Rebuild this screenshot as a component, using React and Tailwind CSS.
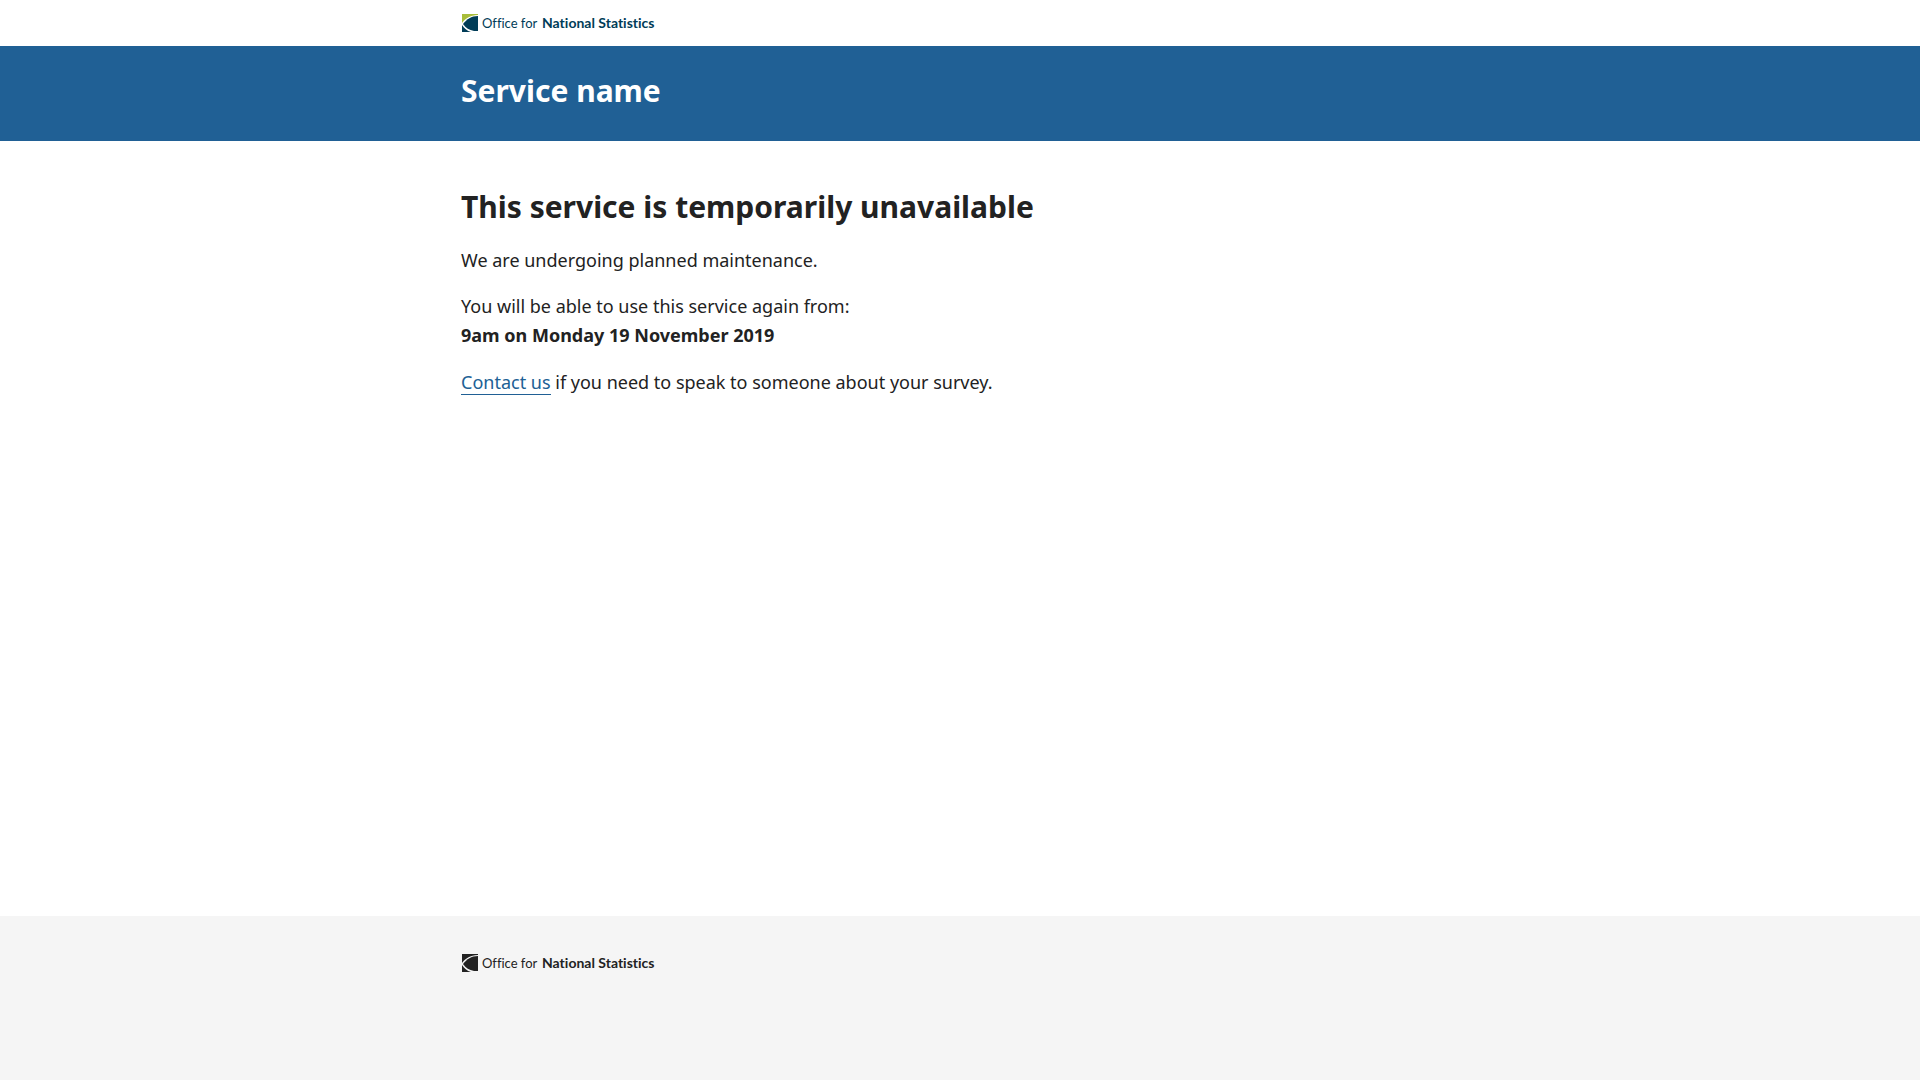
function Logo({ mono }) {
  const dark = mono ? '#222222' : '#003c57';
  const green = mono ? '#222222' : '#a8bd3a';
  return (
    <svg viewBox="0 0 197 19" className="block h-[19px] w-[197px]" role="img" aria-label="Office for National Statistics">
      <path d="M1 0H17V1C9 1 4 5 1 9Z" fill={green} />
      <path d="M17 2V17H13C8 16 5 14 2 10C6 5 10 2 17 2Z" fill={dark} />
      <path d="M1 11C3 14 6 17 10 18H1Z" fill={dark} />
      <g fill={dark} fontFamily="Lato, sans-serif" className="[font-variant-ligatures:none]">
        <text x="21" y="14" fontSize="13">Office for</text>
        <text x="81" y="14" fontSize="14" fontWeight="700">National Statistics</text>
      </g>
    </svg>
  );
}

function Container({ children }) {
  return <div className="mx-auto w-full max-w-[1030px] px-4 box-border">{children}</div>;
}

export default function App() {
  return (
    <div className="flex min-h-screen flex-col bg-white font-['Noto_Sans',sans-serif] text-lg text-[#222222]">
      <header>
        <Container>
          <div className="flex h-[46px] items-center"><a href="#home"><Logo /></a></div>
        </Container>
        <div className="bg-[#206095] pt-[23px] pb-7">
          <Container>
            <p className="text-3xl leading-[44px] font-bold text-white">Service name</p>
          </Container>
        </div>
      </header>
      <main className="grow pt-11">
        <Container>
          <h1 className="mb-[17px] text-3xl leading-[44px] font-bold">This service is temporarily unavailable</h1>
          <p className="mb-[17px] leading-[29px]">We are undergoing planned maintenance.</p>
          <p className="mb-[18px] leading-[29px]">You will be able to use this service again from:<br /><strong>9am on Monday 19 November 2019</strong></p>
          <p className="leading-[29px]"><a href="#contact" className="inline-block border-b border-[#206095] leading-[23px] text-[#206095]">Contact us</a> if you need to speak to someone about your survey.</p>
        </Container>
      </main>
      <footer className="bg-[#f5f5f5] pt-[38px] pb-[107px]">
        <Container><a href="#home" className="block"><Logo mono /></a></Container>
      </footer>
    </div>
  );
}
